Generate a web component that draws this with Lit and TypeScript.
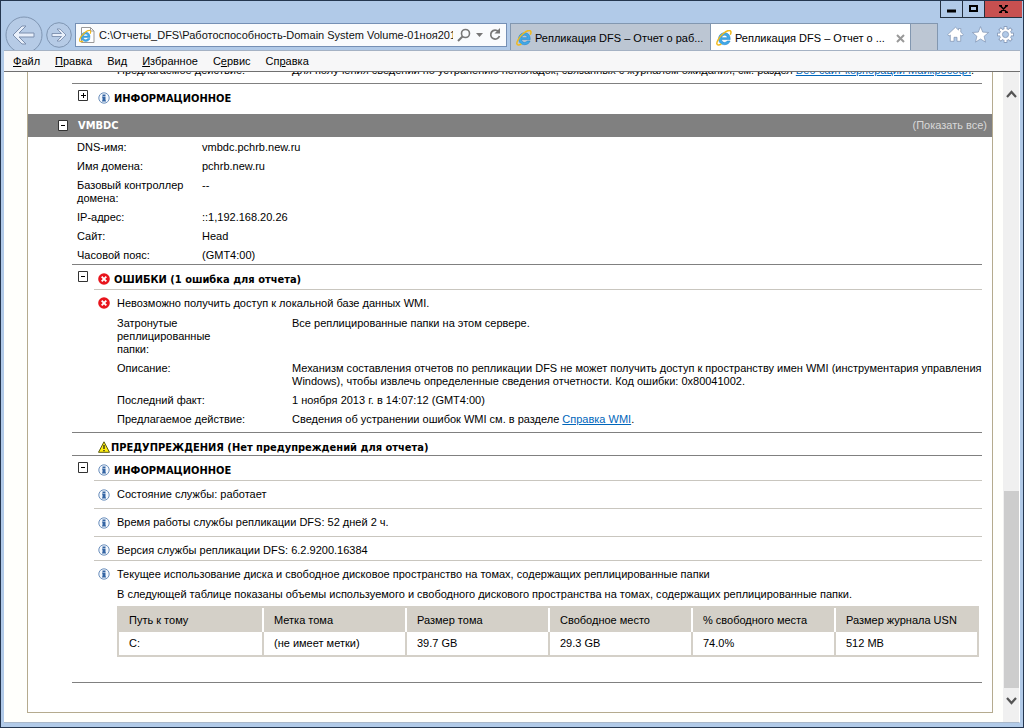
import { LitElement, html, css, svg } from "lit";
import { customElement, property, state } from "lit/decorators.js";

const baseText = css`
  :host {
    display: block;
    box-sizing: border-box;
    font: 11px/13px "Liberation Sans", Arial, sans-serif;
    color: #000;
  }
  *,
  *::before {
    box-sizing: border-box;
  }
  button {
    font: inherit;
    color: inherit;
    padding: 0;
    margin: 0;
    border: 0;
    background: none;
    cursor: pointer;
  }
  svg {
    display: block;
    flex: none;
  }
`;

const ieLogo = svg`
  <path d="M14.2 9.6H5.6c.1 1.7 1.3 2.8 3 2.8 1.200 0 2.100-.5 2.600-1.400h2.900c-.8 2.300-2.800 3.700-5.500 3.700-3.500 0-6-2.400-6-5.900s2.500-6 6-6 5.800 2.500 5.600 6.800zM5.700 7.700h5.600c-.1-1.500-1.200-2.500-2.700-2.500S5.900 6.200 5.700 7.700z" fill="#3fa9e8" stroke="#1b7cc4" stroke-width=".5"/>
  <path d="M14.300 4.800c.9-2 .9-3.400 0-4-1.300-.8-4.200.4-7 2.700C3.500 6.700.4 11.600.9 13.900c.3 1.500 2.200 1.400 4.400.1" fill="none" stroke="#f0b91c" stroke-width="1.500"/>`;

const errorIcon = html`<svg width="12" height="12" viewBox="0 0 12 12" aria-hidden="true">
  <circle cx="6" cy="6" r="5.800" fill="#e8141c" />
  <path d="M3.700 3.700l4.600 4.600M8.300 3.700L3.700 8.300" stroke="#fff" stroke-width="1.900" />
</svg>`;

const infoIcon = html`<svg width="12" height="12" viewBox="0 0 12 12" aria-hidden="true">
  <circle cx="6" cy="6" r="5.200" fill="#f4f8fd" stroke="#6c90bd" />
  <path d="M4.500 2.500h3v1.500h-3zM4 4.500h3.500V8.500H8v1H4v-1h.5v-3H4z" fill="#3465a4" />
</svg>`;

const warningIcon = html`<svg width="12" height="12" viewBox="0 0 12 12" aria-hidden="true">
  <path d="M6 .8L11.500 11.300H.5z" fill="#ffee10" stroke="#4a4a00" stroke-width=".9" />
  <path d="M6 4v4M6 9v1.300" stroke="#222" stroke-width="1.300" />
</svg>`;

@customElement("fold-toggle")
class FoldToggle extends LitElement {
  @property({ type: Boolean }) open = false;

  static styles = [
    baseText,
    css`
      .box {
        display: block;
        width: 10px;
        height: 11px;
      }
    `,
  ];

  render() {
    return html`<button
      class="box"
      aria-label=${this.open ? "Свернуть" : "Развернуть"}
      aria-expanded=${this.open ? "true" : "false"}
      @click=${() => (this.open = !this.open)}
    >
      <svg width="10" height="11" viewBox="0 0 10 11">
        <path d="M.5.5h9v10h-9z" fill="#fff" stroke="#333" />
        <path d=${this.open ? "M3 5.500h4" : "M3 5.500h5M5.500 3v5"} stroke="#000" />
      </svg>
    </button>`;
  }
}

@customElement("browser-chrome")
class BrowserChrome extends LitElement {
  @state() address = "C:\\Отчеты_DFS\\Работоспособность-Domain System Volume-01ноя2013.html";

  menu = [
    ["", "Ф", "айл"],
    ["", "П", "равка"],
    ["Ви", "д", ""],
    ["", "И", "збранное"],
    ["С", "е", "рвис"],
    ["Сп", "р", "авка"],
  ];

  static styles = [
    baseText,
    css`
      .title {
        display: flex;
        justify-content: flex-end;
        height: 22px;
        margin-right: -2px;
      }
      .win {
        display: grid;
        place-items: center;
        width: 22px;
        height: 17px;
        border: solid #24303f;
        border-width: 0 0 1px 1px;
      }
      .win.close {
        width: 38px;
        background: #c75050;
      }
      .bar {
        display: flex;
        align-items: flex-start;
        height: 27px;
      }
      .nav {
        display: flex;
        align-items: center;
        gap: 3px;
        flex: none;
        width: 71px;
        height: 27px;
        padding: 0 0 4px 1px;
      }
      .address {
        display: flex;
        align-items: center;
        flex: 1;
        min-width: 0;
        height: 24px;
        padding: 0 4px 0 3px;
        gap: 4px;
        border: 1px solid #7590b5;
        background: #f9fbfd;
      }
      .address input {
        flex: 1;
        min-width: 0;
        padding: 0;
        border: 0;
        outline: 0;
        background: none;
        color: #111;
        font: 11px/16px "Liberation Sans", Arial, sans-serif;
      }
      .tabs {
        display: flex;
        margin-left: 3px;
      }
      .tab {
        display: flex;
        align-items: center;
        gap: 3px;
        width: 200px;
        height: 27px;
        padding: 2px 5px 0;
        border: 1px solid #8297b0;
        border-width: 1px 0 0 1px;
        background: #bcc6d3;
        line-height: 16px;
        text-align: left;
      }
      .tab .label {
        flex: 1;
        overflow: hidden;
        white-space: nowrap;
        text-overflow: ellipsis;
      }
      .tab.current {
        background: #fff;
      }
      .tab.blank {
        width: 28px;
        border-right-width: 1px;
      }
      .tools {
        display: flex;
        flex: none;
        gap: 8px;
        padding: 3px 6px 0 9px;
      }
      .menu {
        position: relative;
        display: flex;
        align-items: center;
        gap: 15px;
        height: 22px;
        padding: 0 9px;
        background: #f7f7f8;
        border-top: 1px solid #a5b2c4;
        border-bottom: 1px solid #707070;
      }
    `,
  ];

  render() {
    return html`
      <div class="title">
        <button class="win" aria-label="Свернуть окно"><svg width="10" height="8"><path d="M0 6h9" stroke="#000" stroke-width="3" /></svg></button>
        <button class="win" aria-label="Развернуть окно"><svg width="10" height="8"><path d="M1 1h7v5H1z" fill="none" stroke="#000" stroke-width="2" /></svg></button>
        <button class="win close" aria-label="Закрыть"><svg width="9" height="8"><path d="M0 .7h3M6 .7h3M0 7.300h3M6 7.300h3M1.500 1l6 6M7.500 1l-6 6" stroke="#000" stroke-width="1.600" /></svg></button>
      </div>
      <div class="bar">
        <div class="nav">
          <button aria-label="Назад">
            <svg width="38" height="38" viewBox="0 0 38 38">
              <circle cx="19" cy="19" r="18" fill="#b6cbe6" stroke="#7f95b2" />
              <path d="M8 19l9-9h4l-7 7h15v4H14l7 7h-4z" fill="#e8effa" stroke="#7c8fae" />
            </svg>
          </button>
          <button aria-label="Вперед">
            <svg width="26" height="26" viewBox="0 0 26 26">
              <circle cx="13" cy="13" r="12.300" fill="#b6cbe6" stroke="#7f95b2" />
              <path d="M20 13l-6-6h-3l4.500 4.500H6v3h9.500L11 19h3z" fill="#e8effa" stroke="#7c8fae" stroke-width=".9" />
            </svg>
          </button>
        </div>
        <div class="address">
          <svg width="16" height="18" viewBox="0 0 16 18">
            <path d="M2.500 1.500h9l3.500 3.500v11.500H2.500z" fill="#fff" stroke="#999" />
            <path d="M11.500 1.500V5H15" fill="none" stroke="#999" />
            <g transform="translate(0 4) scale(.78)">${ieLogo}</g>
          </svg>
          <input aria-label="Адрес" .value=${this.address} />
          <button aria-label="Поиск"><svg width="14" height="14"><circle cx="8.500" cy="5.500" r="4" fill="none" stroke="#777" stroke-width="1.600" /><path d="M5.500 8.500L1 13" stroke="#777" stroke-width="2" /></svg></button>
          <button aria-label="Список адресов"><svg width="9" height="6"><path d="M1 1h7L4.500 5z" fill="#777" /></svg></button>
          <button aria-label="Обновить"><svg width="14" height="14"><path d="M10.500 3.500A4.500 4.500 0 1 0 11.500 8" fill="none" stroke="#777" stroke-width="1.700" /><path d="M12 0v5.500H6.500z" fill="#777" /></svg></button>
        </div>
        <div class="tabs">
          <button class="tab"><svg width="16" height="16">${ieLogo}</svg><span class="label">Репликация DFS – Отчет о раб...</span></button>
          <button class="tab current"><svg width="16" height="16">${ieLogo}</svg><span class="label">Репликация DFS – Отчет о ...</span><svg width="9" height="9"><path d="M1 1l7 7M8 1L1 8" stroke="#999" stroke-width="2" /></svg></button>
          <button class="tab blank" aria-label="Новая вкладка"></button>
        </div>
        <div class="tools">
          <button aria-label="Домой"><svg width="17" height="17" viewBox="0 0 17 17"><path d="M8.500 1.200L.7 8.600l1.400 1.500 1.200-1.100V15.300H7v-4h3v4h3.700V9l1.200 1.100 1.400-1.500-2.500-2.400V2.500h-2.300v1.600z" fill="#fff" stroke="#7d90b0" stroke-width=".7" /></svg></button>
          <button aria-label="Избранное"><svg width="17" height="17" viewBox="0 0 17 17"><path d="M8.500.6l2.200 5.500 5.900.4-4.500 3.800 1.400 5.800-5-3.100-5 3.100 1.400-5.800L.4 6.500l5.900-.4z" fill="#fff" stroke="#7d90b0" stroke-width=".7" /></svg></button>
          <button aria-label="Сервис">
            <svg width="17" height="17" viewBox="0 0 17 17">
              <g stroke="#7d90b0" stroke-width="3.600"><path d="M8.500.2v16.600M.2 8.500h16.600M2.600 2.600l11.800 11.800M14.400 2.600L2.600 14.400" /></g>
              <circle cx="8.500" cy="8.500" r="6.200" fill="#7d90b0" />
              <g stroke="#fff" stroke-width="2.200"><path d="M8.500.9v15.200M.9 8.500h15.200M3.100 3.100l10.800 10.800M13.900 3.100L3.100 13.900" /></g>
              <circle cx="8.500" cy="8.500" r="5.600" fill="#fff" />
              <circle cx="8.500" cy="8.500" r="3.100" fill="#b1cae8" stroke="#7d90b0" stroke-width=".7" />
            </svg>
          </button>
        </div>
      </div>
      <nav class="menu">${this.menu.map(([a, key, b]) => html`<button>${a}<u>${key}</u>${b}</button>`)}</nav>
    `;
  }
}

@customElement("dfs-report")
class DfsReport extends LitElement {
  server = [
    ["DNS-имя:", "vmbdc.pchrb.new.ru"],
    ["Имя домена:", "pchrb.new.ru"],
    ["Базовый контроллер домена:", "--"],
    ["IP-адрес:", "::1,192.168.20.26"],
    ["Сайт:", "Head"],
    ["Часовой пояс:", "(GMT4:00)"],
  ];

  facts = [
    ["Затронутые\nреплицированные\nпапки:", "Все реплицированные папки на этом сервере."],
    [
      "Описание:",
      "Механизм составления отчетов по репликации DFS не может получить доступ к пространству имен WMI (инструментария управления Windows), чтобы извлечь определенные сведения отчетности. Код ошибки: 0x80041002.",
    ],
    ["Последний факт:", "1 ноября 2013 г. в 14:07:12 (GMT4:00)"],
    ["Предлагаемое действие:", html`Сведения об устранении ошибок WMI см. в разделе <a href="#wmi">Справка WMI</a>.`],
  ];

  notes = ["Состояние службы: работает", "Время работы службы репликации DFS: 52 дней 2 ч.", "Версия службы репликации DFS: 6.2.9200.16384"];

  columns = ["Путь к тому", "Метка тома", "Размер тома", "Свободное место", "% свободного места", "Размер журнала USN"];
  volumes = [["C:", "(не имеет метки)", "39.7 GB", "29.3 GB", "74.0%", "512 MB"]];

  static styles = [
    baseText,
    css`
      :host {
        border: 1px solid #b5ab8e;
        border-top: 0;
        background: #fff;
        padding-bottom: 29px;
      }
      a {
        color: #0066bb;
      }
      dl,
      dd,
      p,
      h2,
      h3 {
        margin: 0;
        font-size: 11px;
      }
      h2,
      h3 {
        font-family: "DejaVu Sans Condensed", "DejaVu Sans", sans-serif;
      }
      .part {
        margin: 0 10px 0 44px;
        border-bottom: 1px solid #808080;
      }
      .part.last {
        padding-bottom: 25px;
      }
      .facts {
        display: grid;
        grid-template-columns: 175px 1fr;
        row-gap: 6px;
        padding: 3px 0 6px 45px;
      }
      .facts dt {
        white-space: pre-line;
      }
      .facts.cut {
        align-content: end;
        height: 11px;
        padding: 0 0 6px 45px;
      }
      .server {
        display: flex;
        align-items: center;
        height: 23px;
        padding: 0 5px 0 30px;
        gap: 10px;
        background: #808080;
        color: #fff;
      }
      .server h2 {
        flex: 1;
      }
      .server button {
        color: #d8d8d8;
      }
      .server-facts {
        display: grid;
        grid-template-columns: 125px 1fr;
        row-gap: 6px;
        padding: 4px 0 2px 5px;
      }
      .server-facts dt {
        padding-right: 15px;
      }
      .head {
        display: flex;
        align-items: center;
        gap: 10px;
        height: 24px;
        padding: 4px 0 0 6px;
      }
      .head fold-toggle {
        align-self: flex-start;
        margin-top: 2px;
      }
      .head.tall {
        height: 30px;
        margin-left: 44px;
        padding: 0 0 2px 6px;
      }
      .head.tall fold-toggle {
        margin-top: 6px;
      }
      .caption {
        display: flex;
        align-items: center;
        gap: 4px;
      }
      .caption.plain {
        height: 22px;
        gap: 1px;
        padding: 6px 0 0 26px;
      }
      .note {
        display: flex;
        align-items: center;
        gap: 7px;
        height: 28px;
        margin-left: 22px;
        padding-left: 4px;
        border-top: 1px solid #c9c6bf;
      }
      .note.tight {
        height: 24px;
        padding-top: 3px;
      }
      .error {
        padding-bottom: 1px;
      }
      .volumes {
        padding: 4px 3px 0 45px;
      }
      table {
        width: 100%;
        margin-top: 5px;
        table-layout: fixed;
        border: 2px solid #d4d0c8;
        border-spacing: 0;
        text-align: left;
      }
      th {
        height: 24px;
        padding: 0 0 0 10px;
        background: #d4d0c8;
        font-weight: normal;
      }
      td {
        height: 23px;
        padding: 0 0 0 10px;
      }
      th + th {
        border-left: 2px solid #fff;
      }
      td + td {
        border-left: 2px solid #d4d0c8;
      }
    `,
  ];

  head(icon: unknown, text: string) {
    return html`<div class="head">
      <fold-toggle open></fold-toggle>
      <div class="caption">${icon}<h3>${text}</h3></div>
    </div>`;
  }

  render() {
    return html`
      <section class="part">
        <dl class="facts cut">
          <dt>Предлагаемое действие:</dt>
          <dd>Для получения сведений по устранению неполадок, связанных с журналом ожидания, см. раздел <a href="#site">Веб-сайт корпорации Майкрософт</a>.</dd>
        </dl>
      </section>
      <div class="head tall">
        <fold-toggle></fold-toggle>
        <div class="caption">${infoIcon}<h3>ИНФОРМАЦИОННОЕ</h3></div>
      </div>
      <header class="server">
        <fold-toggle open></fold-toggle>
        <h2>VMBDC</h2>
        <button>(Показать все)</button>
      </header>
      <section class="part">
        <dl class="server-facts">${this.server.map(([k, v]) => html`<dt>${k}</dt><dd>${v}</dd>`)}</dl>
      </section>
      <section class="part">
        ${this.head(errorIcon, "ОШИБКИ (1 ошибка для отчета)")}
        <div class="error">
          <div class="note tight">${errorIcon}<p>Невозможно получить доступ к локальной базе данных WMI.</p></div>
        </div>
        <dl class="facts">${this.facts.map(([k, v]) => html`<dt>${k}</dt><dd>${v}</dd>`)}</dl>
      </section>
      <section class="part">
        <div class="caption plain">${warningIcon}<h3>ПРЕДУПРЕЖДЕНИЯ (Нет предупреждений для отчета)</h3></div>
      </section>
      <section class="part last">
        ${this.head(infoIcon, "ИНФОРМАЦИОННОЕ")}
        ${this.notes.map((text, i) => html`<div class="note ${i === 2 ? "tight" : ""}">${infoIcon}<p>${text}</p></div>`)}
        <div class="note tight">${infoIcon}<p>Текущее использование диска и свободное дисковое пространство на томах, содержащих реплицированные папки</p></div>
        <div class="volumes">
          <p>В следующей таблице показаны объемы используемого и свободного дискового пространства на томах, содержащих реплицированные папки.</p>
          <table>
            <thead>
              <tr>${this.columns.map((c) => html`<th scope="col">${c}</th>`)}</tr>
            </thead>
            <tbody>
              ${this.volumes.map((row) => html`<tr>${row.map((c) => html`<td>${c}</td>`)}</tr>`)}
            </tbody>
          </table>
        </div>
      </section>
    `;
  }
}

@customElement("app-root")
class AppRoot extends LitElement {
  static styles = [
    baseText,
    css`
      :host {
        display: flex;
        flex-direction: column;
        height: 100vh;
        padding: 0 3px 4px;
        border: 1px solid #24364f;
        background: #b1cae8;
      }
      .view {
        display: flex;
        flex: 1;
        min-height: 0;
        background: #fffffc;
        border-right: 1px solid #fff;
        border-bottom: 1px solid #a9b7c9;
      }
      .page {
        flex: 1;
        min-width: 0;
        overflow: hidden;
        padding: 0 10px 0 23px;
      }
      .scroll {
        display: flex;
        flex-direction: column;
        width: 16px;
        background: #f0f0f0;
      }
      .scroll button {
        display: grid;
        place-items: center;
        height: 34px;
        padding-bottom: 8px;
      }
      .scroll .up {
        height: 44px;
        padding: 0;
      }
      .before {
        flex: 376;
      }
      .thumb {
        flex: 197;
        margin-left: 1px;
        background: #cdcdcd;
      }
    `,
  ];

  render() {
    return html`
      <browser-chrome></browser-chrome>
      <main class="view">
        <div class="page"><dfs-report></dfs-report></div>
        <div class="scroll">
          <button class="up" aria-label="Вверх"><svg width="11" height="8"><path d="M1 7l4.500-5L10 7" fill="none" stroke="#555" stroke-width="2.200" /></svg></button>
          <div class="before"></div>
          <div class="thumb"></div>
          <button aria-label="Вниз"><svg width="11" height="8"><path d="M1 1l4.500 5L10 1" fill="none" stroke="#555" stroke-width="2.200" /></svg></button>
        </div>
      </main>
    `;
  }
}
